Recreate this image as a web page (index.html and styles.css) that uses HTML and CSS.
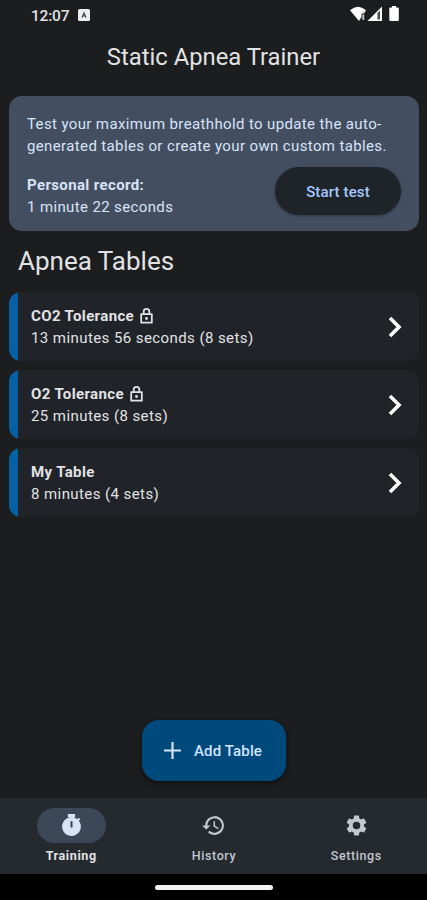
FILE: index.html
```html
<!DOCTYPE html>
<html lang="en">
<head>
<meta charset="utf-8">
<title>Static Apnea Trainer</title>
<link rel="stylesheet" href="styles.css">
</head>
<body>
<div class="app">
  <div class="status">
    <span class="time">12:07</span>
    <svg class="badge" width="12" height="12" viewBox="0 0 12 12"><rect width="12" height="12" rx="1.5" fill="#eee"/><path d="M4 8.500 6 4 8 8.500M4.500 7h3" fill="none" stroke="#444" stroke-width="1.200"/></svg>
    <svg class="signals" width="50" height="18" viewBox="0 0 50 18">
      <path d="M0 5.200Q8-1.800 16 5.200L14 8.500H11.500V12L9 16Z" fill="#fff"/>
      <path d="M13.300 6v1.800M13.300 9.500V15" stroke="#ccc" stroke-width="1.800"/>
      <path d="M17.500 16 32 1.500V16Z" fill="#fff"/>
      <path d="M27.500 8v6.500h2.500V5.500Z" fill="#4a4b4c"/>
      <path d="M40 2.500h2V1h4v1.500h2q.8 0 .8.800V15q0 1-1 1h-7.500q-1 0-1-1V3.300q0-.8.700-.8Z" fill="#fff"/>
    </svg>
  </div>
  <h1>Static Apnea Trainer</h1>
  <section class="record">
    <p class="intro">Test your maximum breathhold to update the auto-<br>generated tables or create your own custom tables.</p>
    <div class="record-row">
      <div><b>Personal record:</b><br>1 minute 22 seconds</div>
      <button class="start">Start test</button>
    </div>
  </section>
  <h2>Apnea Tables</h2>
  <div class="list">
    <div class="item">
      <div><div class="name">CO2 Tolerance<svg class="lock" viewBox="0 0 24 24"><path d="M4.500 9.500h15v12h-15ZM8 9V6a4 4 0 0 1 8 0v3" fill="none" stroke="currentColor" stroke-width="2.500" stroke-linejoin="round"/><circle cx="12" cy="15.500" r="2"/></svg></div><div class="detail">13 minutes 56 seconds (8 sets)</div></div>
      <svg class="chevron" viewBox="0 0 14 22"><path d="m2 2 9 9-9 9"/></svg>
    </div>
    <div class="item">
      <div><div class="name">O2 Tolerance<svg class="lock" viewBox="0 0 24 24"><path d="M4.500 9.500h15v12h-15ZM8 9V6a4 4 0 0 1 8 0v3" fill="none" stroke="currentColor" stroke-width="2.500" stroke-linejoin="round"/><circle cx="12" cy="15.500" r="2"/></svg></div><div class="detail">25 minutes (8 sets)</div></div>
      <svg class="chevron" viewBox="0 0 14 22"><path d="m2 2 9 9-9 9"/></svg>
    </div>
    <div class="item">
      <div><div class="name">My Table</div><div class="detail">8 minutes (4 sets)</div></div>
      <svg class="chevron" viewBox="0 0 14 22"><path d="m2 2 9 9-9 9"/></svg>
    </div>
  </div>
  <button class="add"><svg width="17" height="17" viewBox="0 0 17 17"><path d="M8.500 0v17M0 8.500h17" stroke="currentColor" stroke-width="2.200"/></svg>Add Table</button>
  <nav>
    <div class="tab active">
      <span class="pill"><svg viewBox="0 0 24 24"><path fill-rule="evenodd" d="M8.500 1h7v3h-7ZM19 7.400l1.400-1.400L19 4.600 17.600 6A9 9 0 1 0 19 7.400ZM11 8h2v6h-2Z"/></svg></span>
      <span>Training</span>
    </div>
    <div class="tab">
      <span class="pill"><svg viewBox="0 0 24 24"><path d="M13 3a9 9 0 0 0-9 9H1l3.890 3.890.070.140L9 12H6a7 7 0 1 1 2.060 4.940l-1.420 1.420A9 9 0 1 0 13 3Zm-1 5v5l4.280 2.540.720-1.210-3.500-2.080V8H12Z"/></svg></span>
      <span>History</span>
    </div>
    <div class="tab">
      <span class="pill"><svg viewBox="0 0 24 24"><path d="M19.140 12.940c.04-.3.060-.61.060-.94s-.02-.64-.07-.94l2.030-1.580a.49.490 0 0 0 .12-.61l-1.920-3.320a.49.490 0 0 0-.59-.22l-2.390.96a7 7 0 0 0-1.620-.94l-.36-2.540A.48.480 0 0 0 13.920 2.400h-3.840c-.24 0-.43.170-.47.410l-.36 2.540c-.59.240-1.130.570-1.620.940l-2.390-.96a.48.480 0 0 0-.59.220L2.740 8.870c-.12.210-.08.470.12.610l2.030 1.580a6 6 0 0 0-.02 1.880l-2.030 1.580a.49.490 0 0 0-.12.610l1.920 3.320c.12.220.37.290.59.220l2.390-.96c.5.380 1.030.7 1.620.940l.36 2.540c.05.240.24.410.48.410h3.840c.24 0 .44-.17.470-.41l.36-2.540c.59-.24 1.130-.56 1.620-.94l2.390.96c.22.080.47 0 .59-.22l1.920-3.320a.48.480 0 0 0-.12-.61ZM12 15.600a3.600 3.600 0 1 1 0-7.200 3.600 3.600 0 0 1 0 7.200Z"/></svg></span>
      <span>Settings</span>
    </div>
  </nav>
  <div class="gesture"><span></span></div>
</div>
</body>
</html>
```
FILE: styles.css
```css
* { box-sizing: border-box; }
body { margin: 0; background: #1b1d1e; }
.app {
  width: 427px; height: 900px; display: flex; flex-direction: column;
  background: #1b1d1e; color: #e2e2e5;
  font: 15px/22px Roboto, sans-serif; letter-spacing: .37px;
}
button { border: 0; font: 500 15px/22px Roboto, sans-serif; letter-spacing: .14px; }
.status { height: 30px; padding: 0 27px 0 31px; display: flex; align-items: center; flex: none; }
.time { font-weight: 500; font-size: 15.5px; letter-spacing: -.2px; width: 47px; padding-top: 1px; }
.signals { margin-left: auto; margin-top: -2px; }
h1 { margin: 12px 0 0; text-align: center; font-size: 23.8px; line-height: 30px; font-weight: 400; letter-spacing: 0; }
.record {
  margin: 24px 8px 0 9px; height: 135px; padding: 17px 18px 0; border-radius: 13px;
  background: #434f61; color: #d8e3f8; flex: none;
}
.intro { margin: 0; white-space: nowrap; }
.record-row { display: flex; justify-content: space-between; margin-top: 10px; }
.record-row > div { padding-top: 7px; }
.start { width: 126px; height: 48px; border-radius: 24px; background: #1f2429; color: #a4c9fe; box-shadow: 0 1px 3px #0005; padding-top: 2px; }
h2 { margin: 13px 0 0 18px; font-size: 26px; line-height: 34px; font-weight: 400; letter-spacing: 0; }
.list { margin: 14px 8px 0 9px; display: grid; gap: 10px; }
.item {
  height: 69px; border-radius: 12px; background: linear-gradient(to right, #0561a4 9px, #202429 9px);
  display: flex; justify-content: space-between; align-items: center; padding: 0 17px 0 22px;
}
.list { gap: 9px; }
.name { font-weight: 700; display: flex; align-items: center; }
.detail { letter-spacing: .42px; }
.lock { width: 17px; height: 18px; margin-left: 4px; fill: currentColor; }
.chevron { width: 14px; height: 22px; fill: none; stroke: #fff; stroke-width: 3.6; }
.add {
  width: 144px; height: 61px; margin: auto auto 17px 142px; border-radius: 17px; background: #00497d; color: #d3e4ff;
  display: flex; align-items: center; gap: 13px; padding: 0 0 0 22px; box-shadow: 0 2px 5px #0008; flex: none;
}
nav { height: 76px; background: #252a2f; display: grid; grid-template-columns: repeat(3, 1fr); flex: none; }
.tab { display: flex; flex-direction: column; align-items: center; padding-top: 10px; color: #c3c7cf; font-size: 12.5px; font-weight: 500; line-height: 18px; letter-spacing: .6px; }
.pill { width: 69px; height: 35px; border-radius: 18px; display: flex; align-items: center; justify-content: center; margin-bottom: 4px; }
.pill svg { width: 25px; height: 25px; fill: currentColor; }
.tab:not(.active) { padding-left: 1px; }
.active { color: #e2e2e5; font-weight: 700; }
.active .pill { background: #3c4858; color: #d8e3f8; }
.gesture { height: 26px; background: #000; display: flex; justify-content: center; align-items: center; flex: none; }
.gesture span { width: 118px; height: 5px; border-radius: 3px; background: #f2f2f2; }
```
